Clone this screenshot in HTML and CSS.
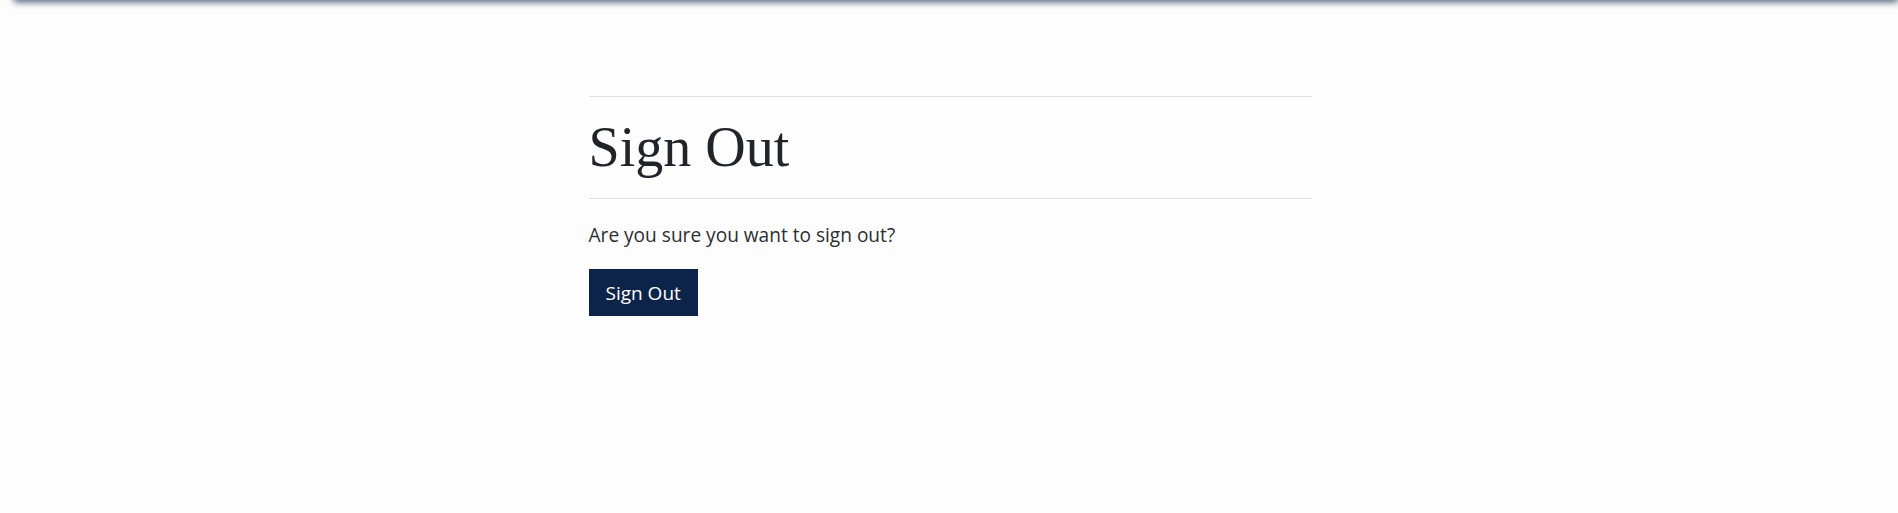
FILE: index.html
```html
<!DOCTYPE html>
<html lang="en">
<head>
<meta charset="utf-8">
<title>Sign Out</title>
<link rel="stylesheet" href="styles.css">
</head>
<body>
<header class="topbar"></header>
<main class="page">
  <section class="panel">
    <hr class="rule">
    <h1 class="title">Sign Out</h1>
    <hr class="rule">
    <p class="lead">Are you sure you want to sign out?</p>
    <form class="actions">
      <button type="button" class="btn">Sign Out</button>
    </form>
  </section>
</main>
</body>
</html>
```
FILE: styles.css
```css
html, body {
  margin: 0;
  padding: 0;
  background: #fdfdfd;
  color: #212529;
  font-family: "Open Sans", "Noto Sans", sans-serif;
}
.topbar {
  position: fixed;
  top: -10px;
  left: 14px;
  right: 0;
  height: 10px;
  background: #0c2449;
  box-shadow: 0 2px 7px rgba(12, 36, 73, 0.75);
}
.page {
  display: flex;
  justify-content: center;
  padding-top: 96px;
}
.panel {
  width: 723px;
  margin-left: 2px;
}
.rule {
  margin: 0;
  border: 0;
  border-top: 1px solid #dedede;
}
.title {
  margin: 0;
  padding: 16px 0 17px;
  font-family: "Liberation Serif", serif;
  font-weight: 400;
  font-size: 56px;
  line-height: 68px;
  color: #212529;
}
.lead {
  margin: 22px 0 0;
  font-size: 19.1px;
  line-height: 28px;
  color: #2b2f33;
}
.actions {
  margin: 20px 0 0;
}
.btn {
  display: block;
  height: 47px;
  padding: 0 17px;
  border: 0;
  border-radius: 0;
  background: #0c2449;
  color: #ffffff;
  font-family: "Open Sans", "Noto Sans", sans-serif;
  font-size: 19px;
}
```
